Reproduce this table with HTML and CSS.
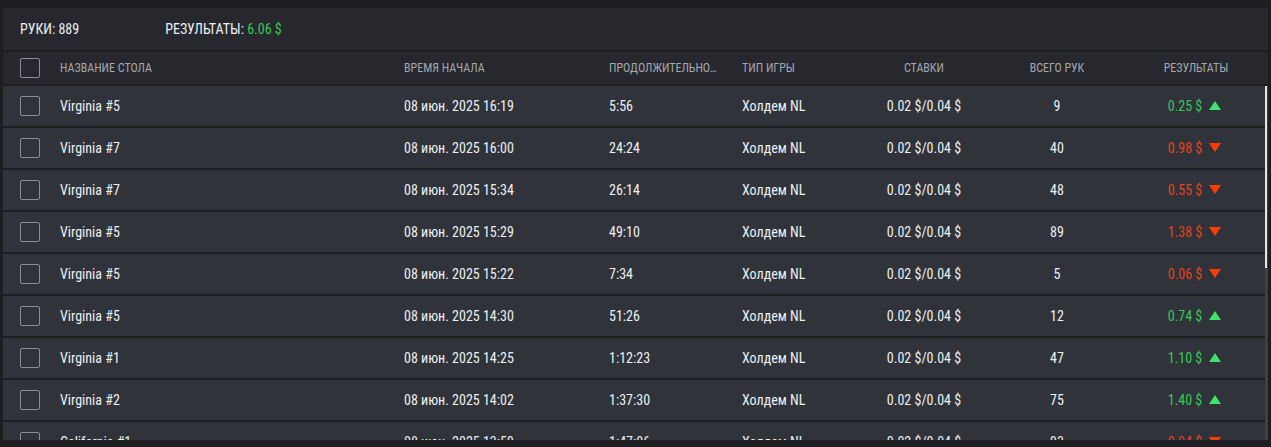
FILE: index.html
```html
<!DOCTYPE html>
<html lang="ru">
<head>
<meta charset="utf-8">
<link rel="stylesheet" href="styles.css">
</head>
<body>
<div class="page">
  <div class="summary">
    <span class="sum-item">РУКИ: 889</span>
    <span class="sum-item">РЕЗУЛЬТАТЫ: <span class="pos">6.06 $</span></span>
  </div>
  <div class="grid head">
    <span class="cb"></span>
    <span class="name">НАЗВАНИЕ СТОЛА</span>
    <span>ВРЕМЯ НАЧАЛА</span>
    <span>ПРОДОЛЖИТЕЛЬНО…</span>
    <span>ТИП ИГРЫ</span>
    <span class="c">СТАВКИ</span>
    <span class="c">ВСЕГО РУК</span>
    <span class="c">РЕЗУЛЬТАТЫ</span>
  </div>
  <div class="body">
    <div class="rows">
      <div class="grid row"><span class="cb"></span><span class="name">Virginia #5</span><span>08 июн. 2025 16:19</span><span>5:56</span><span>Холдем NL</span><span class="c">0.02 $/0.04 $</span><span class="c">9</span><span class="c res pos">0.25 $<i class="up"></i></span></div>
      <div class="grid row"><span class="cb"></span><span class="name">Virginia #7</span><span>08 июн. 2025 16:00</span><span>24:24</span><span>Холдем NL</span><span class="c">0.02 $/0.04 $</span><span class="c">40</span><span class="c res neg">0.98 $<i class="down"></i></span></div>
      <div class="grid row"><span class="cb"></span><span class="name">Virginia #7</span><span>08 июн. 2025 15:34</span><span>26:14</span><span>Холдем NL</span><span class="c">0.02 $/0.04 $</span><span class="c">48</span><span class="c res neg">0.55 $<i class="down"></i></span></div>
      <div class="grid row"><span class="cb"></span><span class="name">Virginia #5</span><span>08 июн. 2025 15:29</span><span>49:10</span><span>Холдем NL</span><span class="c">0.02 $/0.04 $</span><span class="c">89</span><span class="c res neg">1.38 $<i class="down"></i></span></div>
      <div class="grid row"><span class="cb"></span><span class="name">Virginia #5</span><span>08 июн. 2025 15:22</span><span>7:34</span><span>Холдем NL</span><span class="c">0.02 $/0.04 $</span><span class="c">5</span><span class="c res neg">0.06 $<i class="down"></i></span></div>
      <div class="grid row"><span class="cb"></span><span class="name">Virginia #5</span><span>08 июн. 2025 14:30</span><span>51:26</span><span>Холдем NL</span><span class="c">0.02 $/0.04 $</span><span class="c">12</span><span class="c res pos">0.74 $<i class="up"></i></span></div>
      <div class="grid row"><span class="cb"></span><span class="name">Virginia #1</span><span>08 июн. 2025 14:25</span><span>1:12:23</span><span>Холдем NL</span><span class="c">0.02 $/0.04 $</span><span class="c">47</span><span class="c res pos">1.10 $<i class="up"></i></span></div>
      <div class="grid row"><span class="cb"></span><span class="name">Virginia #2</span><span>08 июн. 2025 14:02</span><span>1:37:30</span><span>Холдем NL</span><span class="c">0.02 $/0.04 $</span><span class="c">75</span><span class="c res pos">1.40 $<i class="up"></i></span></div>
      <div class="grid row"><span class="cb"></span><span class="name">California #1</span><span>08 июн. 2025 13:59</span><span>1:47:06</span><span>Холдем NL</span><span class="c">0.02 $/0.04 $</span><span class="c">93</span><span class="c res neg">0.94 $<i class="down"></i></span></div>
    </div>
    <div class="scrollbar"><div class="thumb"></div></div>
  </div>
</div>
</body>
</html>
```
FILE: styles.css
```css
html, body {
  margin: 0;
  padding: 0;
  background: #1d1e22;
  height: 447px;
  overflow: hidden;
}
.page {
  padding: 8px 3px 0 3px;
  height: 432px;
  display: flex;
  flex-direction: column;
  gap: 2px;
  font-family: Roboto, "Liberation Sans", sans-serif;
  font-stretch: 75%;
  color: #eef0f2;
}
.summary {
  height: 42px;
  background: #27282d;
  display: flex;
  align-items: center;
  padding-left: 17px;
  gap: 86px;
  font-size: 14px;
  font-weight: 450;
}
.pos { color: #36c95a; }
.neg { color: #e8421e; }
.grid {
  display: grid;
  grid-template-columns: 20px 364px 205px 133px 116px 132px 134px 1fr;
  align-items: center;
  padding-left: 17px;
}
.grid .name { padding-left: 20px; }
.grid .cb {
  width: 20px;
  height: 20px;
  box-sizing: border-box;
  border: 1.5px solid #8b8e94;
  border-radius: 2px;
}
.head {
  height: 32px;
  background: #27282d;
  font-size: 12px;
  font-weight: 400;
  color: #a3a7ae;
}
.c { text-align: center; }
.body {
  flex: 1;
  min-height: 0;
  display: flex;
  overflow: hidden;
}
.rows {
  flex: 1;
  display: flex;
  flex-direction: column;
  gap: 2px;
  overflow: hidden;
}
.row {
  flex: 0 0 40px;
  background: #30333a;
  font-size: 14px;
  font-weight: 450;
}
.row .res { font-weight: 400; }
.res i {
  display: inline-block;
  width: 0;
  height: 0;
  margin-left: 7px;
  border-left: 6px solid transparent;
  border-right: 6px solid transparent;
  vertical-align: 1px;
}
.res i.up { border-bottom: 9px solid #3fe26a; }
.res i.down { border-top: 9px solid #ff3c05; }
.scrollbar {
  width: 3px;
  background: #3c3f46;
}
.thumb {
  width: 2px;
  height: 182px;
  background: #e4e4e4;
}
```
